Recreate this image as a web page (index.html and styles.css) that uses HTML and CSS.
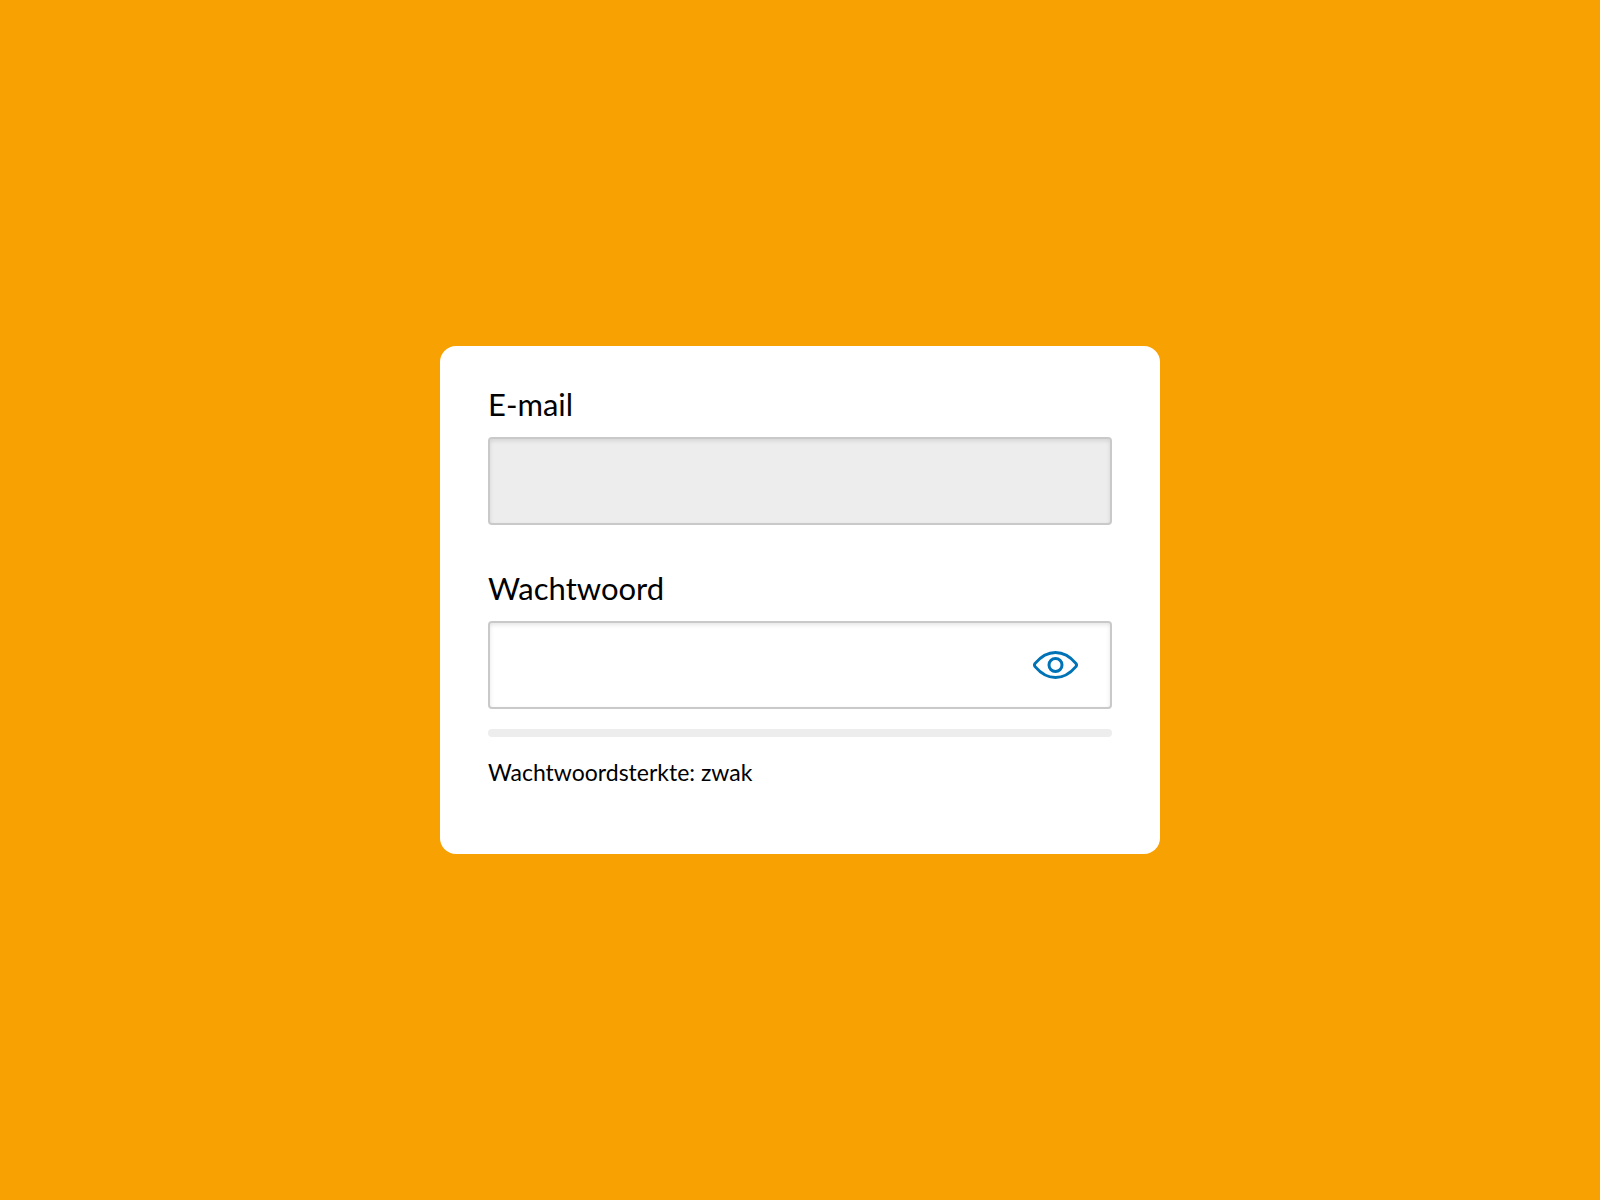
FILE: index.html
```html
<!DOCTYPE html>
<html lang="nl">
<head>
  <meta charset="utf-8">
  <meta name="viewport" content="width=device-width, initial-scale=1">
  <title>Inloggen</title>
  <link rel="stylesheet" href="styles.css">
</head>
<body>
  <form class="card">
    <div class="field">
      <label class="label" for="email">E-mail</label>
      <input class="input input-filled" id="email" type="email">
    </div>
    <div class="field">
      <label class="label" for="password">Wachtwoord</label>
      <div class="control">
        <input class="input input-password" id="password" type="password" aria-describedby="strength">
        <button class="reveal" type="button" aria-label="Toon wachtwoord">
          <svg class="eye" viewBox="0 0 45 28" fill="none" stroke="currentColor" stroke-width="3" aria-hidden="true">
            <path d="M2.1 12.4C7.5 6 14 1.5 22.500 1.500S37.500 6 42.900 12.400Q44.100 14 42.900 15.600C37.500 22 31 26.500 22.500 26.500S7.500 22 2.100 15.600Q.9 14 2.100 12.400Z" stroke-linejoin="round"/>
            <circle cx="22.5" cy="14" r="6.500"/>
          </svg>
        </button>
      </div>
      <div class="meter"></div>
      <p class="strength" id="strength">Wachtwoordsterkte: zwak</p>
    </div>
  </form>
</body>
</html>
```
FILE: styles.css
```css
* {
  box-sizing: border-box;
}

body {
  display: flex;
  align-items: center;
  justify-content: center;
  min-height: 100vh;
  margin: 0;
  background: #f8a102;
  color: #000;
  font-family: Lato, "Liberation Sans", sans-serif;
}

.card {
  display: flex;
  flex-direction: column;
  gap: 44px;
  width: 100%;
  max-width: 720px;
  padding: 39px 48px 67px;
  border-radius: 16px;
  background: #fff;
}

.label {
  display: block;
  margin-bottom: 14px;
  font-size: 31px;
  line-height: 38px;
}

.input {
  display: block;
  width: 100%;
  height: 88px;
  padding: 0 24px;
  border: 2px solid #c9c9c9;
  border-radius: 4px;
  outline: 0;
  background: #fff;
  box-shadow: inset 0 2px 4px rgba(0, 0, 0, 0.1);
  font: inherit;
  font-size: 31px;
}

.input-filled {
  background: #ededed;
}

.input-password {
  padding-right: 96px;
}

.control {
  position: relative;
}

.reveal {
  position: absolute;
  top: 0;
  right: 0;
  display: flex;
  align-items: center;
  height: 100%;
  padding: 0 34px;
  border: 0;
  background: none;
  color: #0073b7;
  cursor: pointer;
}

.eye {
  width: 45px;
  height: 28px;
}

.meter {
  height: 8px;
  margin-top: 20px;
  border-radius: 4px;
  background: #ededed;
}

.strength {
  margin: 20px 0 0;
  font-size: 23px;
  line-height: 30px;
}
```
